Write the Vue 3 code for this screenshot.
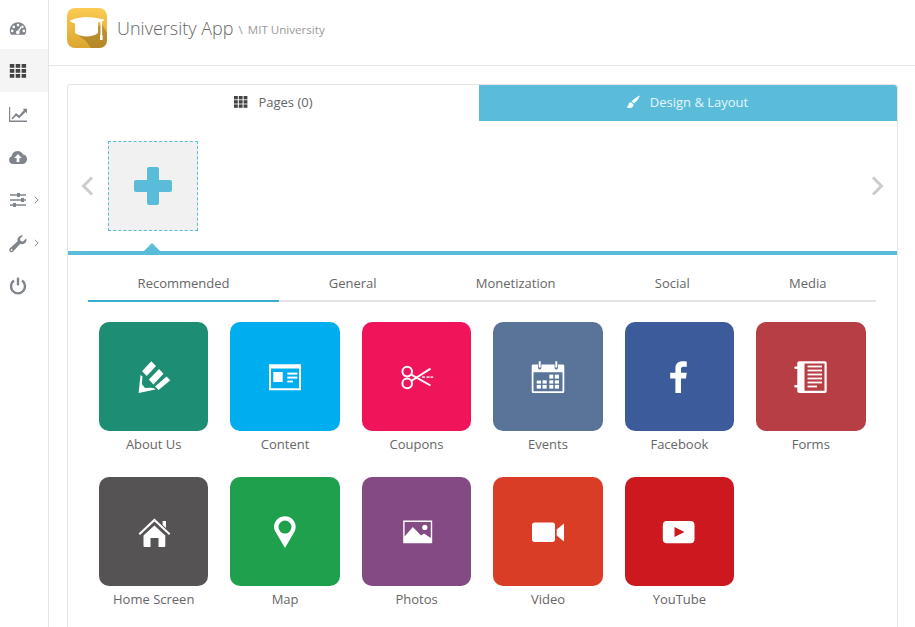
<script setup>
const navItems = [
  { id: 'dash' },
  { id: 'grid', active: true },
  { id: 'chart' },
  { id: 'cloud' },
  { id: 'sliders', more: true },
  { id: 'wrench', more: true },
  { id: 'power' }
]

const tabs = ['Recommended', 'General', 'Monetization', 'Social', 'Media']

// every icon is drawn in a 40x40 box: fills are evenodd paths, lines are stroked paths
const tiles = [
  {
    name: 'About Us', color: '#1d8e74',
    fills: [
      'M17.3 4.3L22 9L12.8 19L8 14.3Z',
      'M25 12L29.5 16.8L19.4 27.4L14.8 22.6Z',
      'M32.6 19.6L36.3 23.3L24.6 33L21 29.6Z',
      'M6.5 18L8.5 19.5L7.8 27L11 31L17.5 30.8L20 31.2L21.5 32.4L4.6 36Z'
    ]
  },
  {
    name: 'Content', color: '#00aeef',
    fills: [
      'M4 7.3H36V33.3H4ZM6 11.5V31.3H34V11.5Z',
      'M8.3 15H17.7V25H8.3Z',
      'M22.3 15.6H32.3V17.6H22.3Z',
      'M22.3 19.6H32.3V21.6H22.3Z',
      'M22.3 23.6H28V25.4H22.3Z'
    ]
  },
  {
    name: 'Coupons', color: '#f0145a',
    strokes: [
      'M10.2 9.8a4.8 4.8 0 1 0 0 9.6a4.8 4.8 0 1 0 0 -9.6Z',
      'M10.2 21.6a4.8 4.8 0 1 0 0 9.6a4.8 4.8 0 1 0 0 -9.6Z',
      'M14.2 17.6L33.5 28.5',
      'M14.2 24L33.5 11.7'
    ],
    fills: ['M25 19.4H28V20.8H25Z', 'M29.5 19.4H32.5V20.8H29.5Z', 'M33.5 19.4H36.2V20.8H33.5Z']
  },
  {
    name: 'Events', color: '#5a7399',
    fills: [
      'M5.2 7.5H10V10.5C10 13 13.4 13 13.4 10.5V7.5H26.6V10.5C26.6 13 30 13 30 10.5V7.5H34.8C35.7 7.5 36.3 8.1 36.3 9V34.5C36.3 35.4 35.7 36 34.8 36H5.2C4.3 36 3.7 35.4 3.7 34.5V9C3.7 8.1 4.3 7.5 5.2 7.5ZM5.5 15.3V34.2H34.5V15.3Z',
      'M10.7 4.3H12.7V10.5H10.7Z', 'M27.3 4.3H29.3V10.5H27.3Z',
      'M21.3 17.6H25.3V21.6H21.3Z', 'M26.8 17.6H31V21.6H26.8Z',
      'M8.7 23.6H13V26.6H8.7Z', 'M14.5 23.3H18.7V26.6H14.5Z', 'M21.3 23.3H25.3V26.6H21.3Z', 'M26.8 23.3H31V26.6H26.8Z',
      'M8.7 27.9H13V31.6H8.7Z', 'M14.5 27.9H18.7V31.6H14.5Z', 'M21.3 27.9H25.3V31.6H21.3Z', 'M26.8 27.9H31V31.6H26.8Z'
    ]
  },
  {
    name: 'Facebook', color: '#3b5b9a',
    fills: ['M16.4 36V21.5H11.2V15.8H16.4V11.5C16.4 6.6 19.4 4.3 23.5 4.3C25.4 4.3 27 4.4 27.8 4.6V9.7H24.6C22.4 9.7 22 10.8 22 12.2V15.8H27.7L27 21.5H22V36Z']
  },
  {
    name: 'Forms', color: '#b83e45',
    fills: [
      'M8.5 4.3H34C35 4.3 35.7 5 35.7 6V34.3C35.7 35.3 35 36 34 36H8.5C7 36 6.3 35.3 6.3 34V6.3C6.3 5 7 4.3 8.5 4.3ZM13.5 6.5V33.8H33.5V6.5Z',
      'M16.5 8.6H31V10.4H16.5Z', 'M16.5 12.6H31V14.4H16.5Z', 'M16.5 16.6H31V18.4H16.5Z', 'M16.5 20.6H31V22.4H16.5Z', 'M16.5 24.6H31V26.4H16.5Z', 'M16.5 28.6H26V30.4H16.5Z',
      'M4 9.6H9C10 9.6 10 12 9 12H4C3 12 3 9.6 4 9.6Z',
      'M4 28H9C10 28 10 30.4 9 30.4H4C3 30.4 3 28 4 28Z'
    ]
  },
  {
    name: 'Home Screen', color: '#565354',
    fills: [
      'M4.6 21.5L20.4 6.6L36.3 21.5L35 23L20.4 9.5L6 23Z',
      'M28.6 9H32V16L28.6 13Z',
      'M9.5 23.4L20.4 13.4L31.3 23.4V33.5C31.3 34.5 30.8 35 29.8 35H24.5V26H16.5V35H11C10 35 9.5 34.5 9.5 33.5Z'
    ]
  },
  {
    name: 'Map', color: '#1fa04c',
    fills: ['M20 36L11.5 21.5C10 19 9 17.2 9 15C9 9 14 4.3 20 4.3C26 4.3 30.7 9 30.7 15C30.7 17.2 29.8 19 28.4 21.5ZM20 8.6A6.5 6.5 0 1 0 20 21.6A6.5 6.5 0 1 0 20 8.6Z']
  },
  {
    name: 'Photos', color: '#834a84',
    fills: [
      'M6.2 8.6H35.2V31.3H6.2ZM7.6 10V24.5L15.8 15L24 23.5L27 21.5L33.8 26V10Z',
      'M27.8 12.8A2.6 2.6 0 1 0 27.8 18A2.6 2.6 0 1 0 27.8 12.8Z'
    ]
  },
  {
    name: 'Video', color: '#da3d26',
    fills: [
      'M6.5 10.6H24.5C26 10.6 27 11.6 27 13V27.5C27 29 26 30 24.5 30H6.5C5 30 4 29 4 27.5V13C4 11.6 5 10.6 6.5 10.6Z',
      'M28.7 17.5L36 11.5V29.5L28.7 23.5Z'
    ]
  },
  {
    name: 'YouTube', color: '#cc181e',
    fills: ['M7.5 9H31.8C33.9 9 35.5 10.6 35.5 12.7V27.6C35.5 29.7 33.9 31.3 31.8 31.3H7.5C5.4 31.3 3.8 29.7 3.8 27.6V12.7C3.8 10.6 5.4 9 7.5 9ZM15.5 15V25L25.5 20Z']
  }
]
</script>

<template>
  <div class="page">
    <aside class="sidebar">
      <div v-for="item in navItems" :key="item.id" class="nav-item" :class="{ active: item.active }">
        <svg class="nav-icon" viewBox="0 0 20 20">
          <path v-if="item.id === 'dash'" transform="translate(0 .8)" fill-rule="evenodd" d="M10 3.5C5 3.5 1.8 7.5 1.8 11.5C1.8 13.5 2.4 15 3.2 16H16.8C17.6 15 18.2 13.5 18.2 11.5C18.2 7.5 15 3.5 10 3.5ZM10 5A1.3 1.3 0 1 1 10 7.6A1.3 1.3 0 1 1 10 5ZM5.7 6.8A1.3 1.3 0 1 1 5.7 9.4A1.3 1.3 0 1 1 5.7 6.8ZM14.3 6.8A1.3 1.3 0 1 1 14.3 9.4A1.3 1.3 0 1 1 14.3 6.8ZM4.2 10.8A1.3 1.3 0 1 1 4.2 13.4A1.3 1.3 0 1 1 4.2 10.8ZM15.8 10.8A1.3 1.3 0 1 1 15.8 13.4A1.3 1.3 0 1 1 15.8 10.8ZM12.8 7.5L13.8 8L11.3 12.5A1.8 1.8 0 1 1 10 11.7Z" />
          <template v-else-if="item.id === 'grid'">
            <rect v-for="c in 9" :key="c" :x="1.8 + ((c - 1) % 3) * 5.9" :y="3 + Math.floor((c - 1) / 3) * 5" width="4.5" height="3.8" />
          </template>
          <path v-else-if="item.id === 'chart'" d="M1 3H2.2V16.5H19V18H1ZM3.5 14.5L8 9L11 11.5L16 6L14.5 4.8H19V9.5L17.5 8L11.2 14.2L8.2 11.8L4.5 15.5Z" />
          <path v-else-if="item.id === 'cloud'" fill-rule="evenodd" d="M5 17C2.8 17 1 15.3 1 13C1 11.2 2.2 9.8 3.7 9.3C3.8 6.8 6 4 9.5 4C12 4 14 5.4 15 7.6C17.3 7.7 19 9.6 19 12C19 14.8 17 17 14.5 17ZM10 7L6.2 11H8.6V15H11.4V11H13.8Z" />
          <path v-else-if="item.id === 'sliders'" fill-rule="evenodd" d="M2 4.2H9V3H12V4.2H18V5.8H12V7H9V5.8H2ZM2 9.2H13V8H16V9.2H18V10.8H16V12H13V10.8H2ZM2 14.2H5V13H8V14.2H18V15.8H8V17H5V15.8H2Z" />
          <path v-else-if="item.id === 'wrench'" transform="translate(0 .8)" fill-rule="evenodd" d="M18.4 5.5C18.8 8.2 16.6 10.7 13.7 10.4C13.1 10.4 12.6 10.2 12.2 10L5.2 17.6C4.2 18.7 2.5 18.5 1.8 17.7C1 16.8 1 15.4 1.9 14.5L9.6 7.4C9 5.2 10.2 2.6 12.6 1.9C13.5 1.6 14.4 1.6 15.1 1.9L12 4.8L12.6 7.2L15 7.8L18 4.7C18.2 4.9 18.3 5.2 18.4 5.5ZM3.6 15.2A.9 .9 0 1 0 3.6 17A.9 .9 0 1 0 3.6 15.2Z" />
          <g v-else-if="item.id === 'power'" transform="translate(0 -.8)">
            <path class="ring" d="M6 5.4A7 7 0 1 0 14 5.4" />
            <rect x="8.8" y="2.2" width="2.4" height="8" rx="1" />
          </g>
        </svg>
        <svg v-if="item.more" class="nav-more" viewBox="0 0 6 10"><path d="M1 1L5 5L1 9" /></svg>
      </div>
    </aside>

    <main class="main">
      <header class="topbar">
        <svg class="logo" viewBox="0 0 40 40">
          <defs>
            <linearGradient id="logoBg" x1="0" y1="0" x2="0" y2="1">
              <stop offset="0" stop-color="#fbcb52" />
              <stop offset="1" stop-color="#dba62f" />
            </linearGradient>
          </defs>
          <rect width="40" height="40" rx="8" fill="url(#logoBg)" />
          <path d="M8 25L19 33L24 40H32Q40 40 40 32V25L35 16L25 22Z" fill="#8d6a23" opacity=".5" />
          <path d="M8 15H31V25C26 29.5 13 29.5 8 25Z" fill="#fff" />
          <path d="M3 12.5Q17 6 37 11.5Q37 13 33 14C24 17 14 17 8 15.5Q3 14 3 12.5Z" fill="#fff" />
          <rect x="33.5" y="12" width="1.6" height="15" fill="#fff" />
          <rect x="33" y="27" width="2.6" height="5" fill="#fff" />
        </svg>
        <h1 class="title">University App</h1>
        <span class="crumb"><b>\</b> MIT University</span>
      </header>

      <section class="content">
        <div class="card">
          <div class="card-tabs">
            <div class="card-tab">
              <svg class="tab-icon" viewBox="0 0 14 12">
                <rect v-for="c in 9" :key="c" :x="((c - 1) % 3) * 4.8" :y="Math.floor((c - 1) / 3) * 4.2" width="3.8" height="3.4" />
              </svg>
              Pages (0)
            </div>
            <div class="card-tab design">
              <svg class="tab-icon" viewBox="0 0 14 14">
                <path d="M14 0.5C11 1.5 7.5 4 5.5 6.5L8 8.6C10.5 6.5 13 3.5 14 0.5ZM4.8 7.2C3 7.4 2.6 8.6 2.4 9.8C2.2 11 1.5 11.6 0.3 11.8C2 13.6 5.6 13.6 7 11.4C7.6 10.4 7.5 9.3 7.2 9Z" />
              </svg>
              Design &amp; Layout
            </div>
          </div>

          <div class="pages-strip">
            <svg class="arrow" viewBox="0 0 13 20"><path d="M11 1.5L2.5 10L11 18.5" /></svg>
            <div class="add-page">
              <svg class="plus" viewBox="0 0 38 38"><path d="M13 2C13 .9 13.9 0 15 0H23C24.1 0 25 .9 25 2V13H36C37.1 13 38 13.9 38 15V23C38 24.1 37.1 25 36 25H25V36C25 37.1 24.1 38 23 38H15C13.9 38 13 37.1 13 36V25H2C.9 25 0 24.1 0 23V15C0 13.9 .9 13 2 13H13Z" /></svg>
              <span class="add-caret"></span>
            </div>
            <svg class="arrow" viewBox="0 0 13 20"><path d="M2 1.5L10.5 10L2 18.5" /></svg>
          </div>

          <nav class="types">
            <div v-for="(tab, i) in tabs" :key="tab" class="type" :class="{ current: i === 0 }">{{ tab }}</div>
          </nav>

          <div class="tiles">
            <div v-for="t in tiles" :key="t.name" class="tile">
              <div class="tile-box" :style="{ background: t.color }">
                <svg class="tile-icon" viewBox="0 0 40 40">
                  <path v-for="d in t.fills" :key="d" :d="d" fill-rule="evenodd" />
                  <path v-for="d in t.strokes" :key="d" :d="d" class="line" />
                </svg>
              </div>
              <div class="tile-name">{{ t.name }}</div>
            </div>
          </div>
        </div>
      </section>
    </main>
  </div>
</template>

<style>
html, body {
  margin: 0;
  overflow: hidden;
}
</style>

<style scoped>
.page {
  display: flex;
  height: 627px;
  overflow: hidden;
  background: #fff;
  font-family: "Open Sans", sans-serif;
  color: #666;
}

.sidebar {
  flex: none;
  width: 48px;
  padding-top: 6px;
  border-right: 1px solid #e5e5e5;
}

.nav-item {
  display: flex;
  align-items: center;
  height: 43px;
  padding-left: 8px;
}

.nav-item.active {
  background: #f5f5f5;
}

.nav-icon {
  width: 20px;
  height: 20px;
  fill: #80858c;
}

.nav-item.active .nav-icon {
  fill: #444;
}

.nav-icon .ring {
  fill: none;
  stroke: #80858c;
  stroke-width: 2.4;
}

.nav-more {
  width: 5px;
  height: 8px;
  margin-left: 6px;
  fill: none;
  stroke: #80858c;
  stroke-width: 1.2;
}

.main {
  flex: 1;
  min-width: 0;
}

.topbar {
  display: flex;
  align-items: center;
  height: 66px;
  padding: 0 0 9px 18px;
  box-sizing: border-box;
  border-bottom: 1px solid #e5e5e5;
}

.logo {
  width: 40px;
  height: 40px;
  margin-right: 10px;
}

.title {
  margin: 0;
  font-size: 18px;
  font-weight: 300;
  color: #666;
}

.crumb {
  margin-left: 5px;
  margin-top: 3px;
  font-size: 11.6px;
  color: #999;
}

.crumb b {
  font-weight: 400;
  margin-right: 2px;
}

.content {
  padding: 18px 17px 0 18px;
}

.card {
  border: 1px solid #e5e5e5;
  border-radius: 3px;
}

.card-tabs {
  display: flex;
  height: 36px;
}

.card-tab {
  flex: 1;
  display: flex;
  align-items: center;
  justify-content: center;
  gap: 10px;
  padding-bottom: 2px;
  box-sizing: border-box;
  font-size: 13px;
}

.card-tab:first-child {
  flex: 0 0 411px;
}

.card-tab.design {
  background: #5bbcd9;
  color: #e6f6fb;
  border-top-right-radius: 3px;
  padding-right: 2px;
}

.tab-icon {
  width: 14px;
  height: 12px;
  fill: #444;
}

.design .tab-icon {
  height: 14px;
  fill: #f2fafd;
}

.pages-strip {
  display: flex;
  align-items: flex-start;
  justify-content: space-between;
  height: 134px;
  padding: 20px 13px 0;
  box-sizing: border-box;
  border-bottom: 4px solid #5bbcd9;
}

.arrow {
  width: 13px;
  height: 20px;
  margin-top: 35px;
  fill: none;
  stroke: #ccc;
  stroke-width: 3;
}

.add-page {
  display: flex;
  align-items: center;
  justify-content: center;
  width: 90px;
  height: 90px;
  box-sizing: border-box;
  margin-right: auto;
  margin-left: 14px;
  border: 1px dashed #5bbcd9;
  background: #f1f1f1;
  position: relative;
}

.plus {
  width: 38px;
  height: 38px;
  fill: #5bbcd9;
}

.add-caret {
  position: absolute;
  left: 35px;
  bottom: -21px;
  border-left: 8px solid transparent;
  border-right: 8px solid transparent;
  border-bottom: 8px solid #5bbcd9;
}

.types {
  display: flex;
  margin: 18px 21px 0 20px;
  border-bottom: 2px solid #e3e3e3;
}

.type {
  flex: 1 1 auto;
  padding: 0 0 7px;
  margin-bottom: -2px;
  text-align: center;
  font-size: 13px;
  line-height: 20px;
  border-bottom: 2px solid transparent;
}

.type.current {
  border-bottom-color: #3aaed2;
}

.tiles {
  display: grid;
  grid-template-columns: repeat(6, 1fr);
  margin: 20px 20.5px 0 20px;
}

.tile {
  padding: 0 11px 23.6px;
  text-align: center;
}

.tile-box {
  display: flex;
  align-items: center;
  justify-content: center;
  aspect-ratio: 1;
  border-radius: 10px;
}

.tile-icon {
  width: 40px;
  height: 40px;
  fill: #fff;
}

.tile-icon .line {
  fill: none;
  stroke: #fff;
  stroke-width: 2;
}

.tile-name {
  margin-top: 5px;
  font-size: 13px;
  line-height: 17px;
}
</style>
